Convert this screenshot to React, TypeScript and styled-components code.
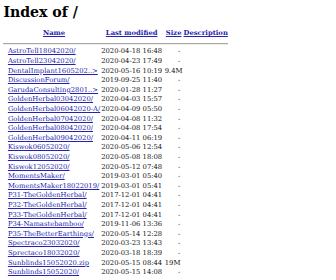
import React from "react";
import styled, { createGlobalStyle } from "styled-components";

const Global = createGlobalStyle`
  html, body { margin: 0; padding: 0; background: #fff; }
  body {
    font-family: "DejaVu Serif", serif;
    font-size: 6.8px;
    color: #111;
  }
`;

const Page = styled.div`
  padding: 3.7px 3.4px 0 3.4px;
`;

const Title = styled.h1`
  margin: 0 0 9.5px 0;
  font-family: "DejaVu Serif", serif;
  font-weight: bold;
  font-size: 14.1px;
  line-height: normal;
  color: #000;
`;

const Listing = styled.table`
  border-collapse: separate;
  border-spacing: 1.7px 0;
  margin-left: -1px;
`;

const HeadCell = styled.th<{ $w?: number; $lead?: number }>`
  padding: 0 0 0 ${(p) => p.$lead ?? 0}px;
  line-height: 9.6px;
  font-weight: bold;
  text-align: center;
  vertical-align: top;
  ${(p) => (p.$w ? `width: ${p.$w}px;` : "")}
`;

const RuleCell = styled.th`
  padding: 0;
  height: 8.7px;
  vertical-align: top;
`;

const Rule = styled.hr`
  margin: 4.16px 0 0 0;
  height: 0;
  border: 0;
  border-top: 1px solid #a6a6a6;
  border-bottom: 1px solid #ededed;
`;

const Cell = styled.td<{ $align?: "left" | "right"; $pad?: number; $lead?: number }>`
  padding: 0 ${(p) => p.$pad ?? 0}px 0 ${(p) => p.$lead ?? 0}px;
  line-height: 9.6px;
  text-align: ${(p) => p.$align ?? "left"};
  vertical-align: top;
  white-space: nowrap;
`;

const Link = styled.a`
  color: #2323b0;
  text-decoration: underline;
`;

type Entry = { name: string; date: string; size: string };

const entries: Entry[] = [
  { name: "AstroTell18042020/", date: "2020-04-18 16:48", size: "-" },
  { name: "AstroTell23042020/", date: "2020-04-23 17:49", size: "-" },
  { name: "DentalImplant1605202..>", date: "2020-05-16 10:19", size: "9.4M" },
  { name: "DiscussionForum/", date: "2019-09-25 11:40", size: "-" },
  { name: "GarudaConsulting2801..>", date: "2020-01-28 11:27", size: "-" },
  { name: "GoldenHerbal03042020/", date: "2020-04-03 15:57", size: "-" },
  { name: "GoldenHerbal06042020-A/", date: "2020-04-09 05:50", size: "-" },
  { name: "GoldenHerbal07042020/", date: "2020-04-08 11:32", size: "-" },
  { name: "GoldenHerbal08042020/", date: "2020-04-08 17:54", size: "-" },
  { name: "GoldenHerbal09042020/", date: "2020-04-11 06:19", size: "-" },
  { name: "Kiswok06052020/", date: "2020-05-06 12:54", size: "-" },
  { name: "Kiswok08052020/", date: "2020-05-08 18:08", size: "-" },
  { name: "Kiswok12052020/", date: "2020-05-12 07:48", size: "-" },
  { name: "MomentsMaker/", date: "2019-03-01 05:40", size: "-" },
  { name: "MomentsMaker18022019/", date: "2019-03-01 05:41", size: "-" },
  { name: "P31-TheGoldenHerbal/", date: "2017-12-01 04:41", size: "-" },
  { name: "P32-TheGoldenHerbal/", date: "2017-12-01 04:41", size: "-" },
  { name: "P33-TheGoldenHerbal/", date: "2017-12-01 04:41", size: "-" },
  { name: "P34-Namastebamboo/", date: "2019-11-06 13:36", size: "-" },
  { name: "P35-TheBetterEarthings/", date: "2020-05-14 12:28", size: "-" },
  { name: "Spectraco23032020/", date: "2020-03-23 13:43", size: "-" },
  { name: "Sprectaco18032020/", date: "2020-03-18 18:39", size: "-" },
  { name: "Sunblinds15052020.zip", date: "2020-05-15 08:44", size: "19M" },
  { name: "Sunblinds15052020/", date: "2020-05-15 14:08", size: "-" },
];

export default function App() {
  return (
    <>
      <Global />
      <Page>
        <Title>Index of /</Title>
        <Listing>
          <tbody>
            <tr>
              <HeadCell $w={3.5} />
              <HeadCell>
                <Link href="#">Name</Link>
              </HeadCell>
              <HeadCell>
                <Link href="#">Last modified</Link>
              </HeadCell>
              <HeadCell $lead={1.6}>
                <Link href="#">Size</Link>
              </HeadCell>
              <HeadCell>
                <Link href="#">Description</Link>
              </HeadCell>
            </tr>
            <tr>
              <RuleCell colSpan={5}>
                <Rule />
              </RuleCell>
            </tr>
            {entries.map((e) => (
              <tr key={e.name}>
                <Cell />
                <Cell>
                  <Link href="#">{e.name}</Link>
                </Cell>
                <Cell $align="right">{e.date}</Cell>
                <Cell
                  $align="right"
                  $lead={1.6}
                  $pad={e.size === "9.4M" ? 0 : 2.2}
                >
                  {e.size}
                </Cell>
                <Cell>&nbsp;</Cell>
              </tr>
            ))}
          </tbody>
        </Listing>
      </Page>
    </>
  );
}
